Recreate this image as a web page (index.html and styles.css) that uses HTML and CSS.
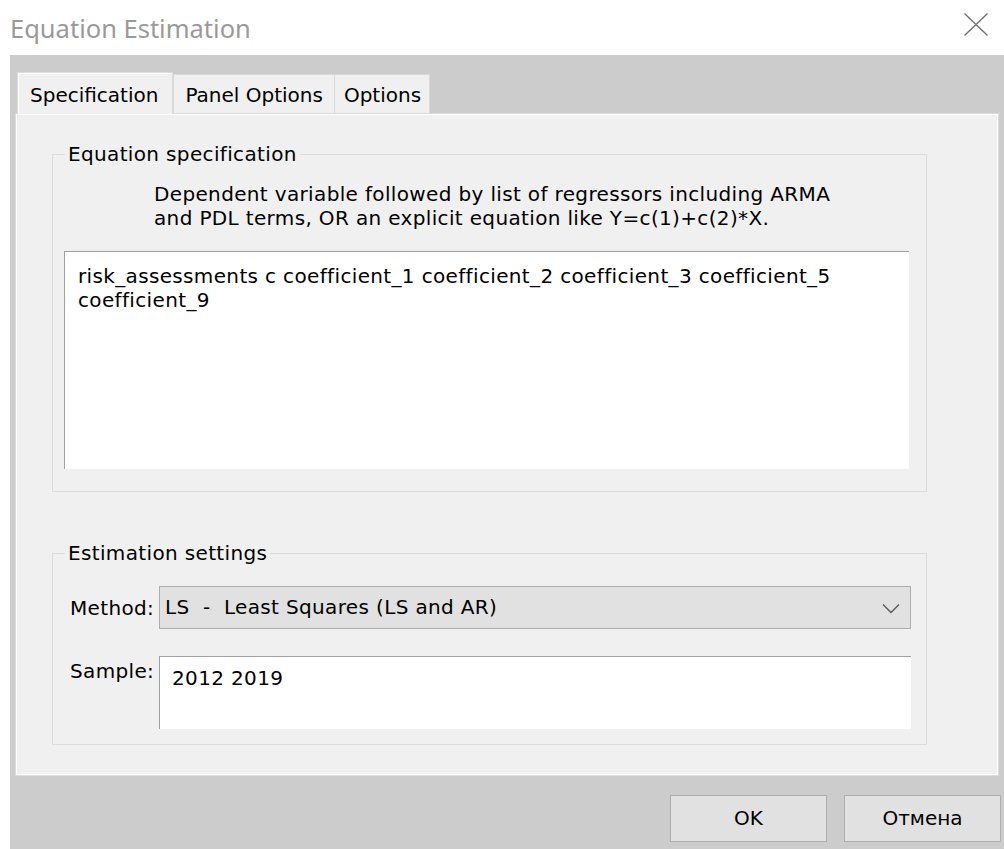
FILE: index.html
```html
<!DOCTYPE html>
<html lang="en">
<head>
<meta charset="utf-8">
<title>Equation Estimation</title>
<link rel="stylesheet" href="styles.css">
</head>
<body>
<div class="titlebar">
  <div class="title">Equation Estimation</div>
  <svg class="close" width="24" height="23" viewBox="0 0 24 23" aria-hidden="true">
    <path d="M0.5 0.5 L23.5 22.5 M23.5 0.5 L0.5 22.5" stroke="#6e6e6e" stroke-width="1.3" fill="none"/>
  </svg>
</div>
<div class="window">
  <div class="tabs">
    <div class="tab active">Specification</div>
    <div class="tab wide">Panel Options</div>
    <div class="tab">Options</div>
  </div>
  <div class="page">
    <fieldset class="group spec">
      <legend>Equation specification</legend>
      <p class="hint">Dependent variable followed by list of regressors including ARMA<br>and PDL terms, OR an explicit equation like Y=c(1)+c(2)*X.</p>
      <div class="edit big">risk_assessments c coefficient_1 coefficient_2 coefficient_3 coefficient_5<br>coefficient_9</div>
    </fieldset>
    <fieldset class="group settings">
      <legend>Estimation settings</legend>
      <div class="row method">
        <span class="label">Method:</span>
        <div class="combo">
          <span>LS&nbsp; - &nbsp;Least Squares (LS and AR)</span>
          <svg width="18" height="11" viewBox="0 0 18 11" aria-hidden="true">
            <path d="M1 1.5 L9 9.5 L17 1.5" stroke="#5a5a5a" stroke-width="1.4" fill="none"/>
          </svg>
        </div>
      </div>
      <div class="row sample">
        <span class="label">Sample:</span>
        <div class="edit small">2012 2019</div>
      </div>
    </fieldset>
  </div>
  <div class="footer">
    <div class="button">OK</div>
    <div class="button">Отмена</div>
  </div>
</div>
</body>
</html>
```
FILE: styles.css
```css
html, body {
  margin: 0;
  background: #ffffff;
}

body {
  font-family: "DejaVu Sans", "Liberation Sans", sans-serif;
  font-size: 20px;
  line-height: 24px;
  color: #000;
  width: 1004px;
  height: 849px;
  overflow: hidden;
}

/* window caption */
.titlebar {
  height: 55px;
  display: flex;
  align-items: center;
  justify-content: space-between;
  padding: 0 16px 0 10px;
  box-sizing: border-box;
}

.title {
  font-family: "Noto Sans", "Open Sans", sans-serif;
  font-size: 25.5px;
  line-height: 30px;
  color: #9a9a9a;
}

.close {
  display: block;
  margin-top: -6px;
}

/* dialog client area */
.window {
  margin-left: 10px;
  height: 794px;
  background: #cccccc;
  padding: 17px 5px 0 5px;
  box-sizing: border-box;
}

.tabs {
  display: flex;
  align-items: flex-end;
  height: 41px;
  padding-left: 2px;
}

.tab {
  height: 39px;
  box-sizing: border-box;
  padding: 8px 8px 0 9px;
  background: #f0f0f0;
  border: 1px solid #d9d9d9;
  border-bottom: none;
  margin-right: -1px;
  white-space: nowrap;
}

.tab.wide {
  padding: 8px 11px 0 11px;
}

.tab.active {
  height: 42px;
  padding: 10px 14px 0 12px;
  border-color: #dadada;
  box-shadow: inset 1px 1px 0 #ffffff;
  position: relative;
  z-index: 1;
  margin-bottom: -1px;
  margin-right: 0;
}

.page {
  height: 663px;
  box-sizing: border-box;
  background: #f0f0f0;
  border: 1px solid #dadada;
  box-shadow: inset 1px 1px 0 #ffffff, inset -1px -1px 0 #ffffff;
  padding: 28px 71px 0 36px;
  letter-spacing: 0.35px;
}

/* group boxes */
.group {
  margin: 0;
  padding: 0;
  border: 1px solid #dcdcdc;
  min-width: 0;
}

.group legend {
  margin-left: 12px;
  padding: 0 3px;
}

.hint {
  margin: 16px 0 0 101px;
}

.edit {
  background: #ffffff;
  border-top: 1px solid #a0a0a0;
  border-left: 1px solid #a0a0a0;
  box-sizing: border-box;
}

.edit.big {
  margin: 21px 17px 22px 11px;
  height: 218px;
  padding: 12px 0 0 13px;
}

.settings {
  margin-top: 49px;
}

.row {
  display: flex;
  align-items: flex-start;
  padding-left: 17px;
  margin-right: 15px;
}

.row .label {
  width: 89px;
  flex: none;
}

.method {
  margin-top: 21px;
  align-items: center;
}

.combo {
  flex: 1;
  height: 43px;
  box-sizing: border-box;
  background: #e1e1e1;
  border: 1px solid #adadad;
  display: flex;
  align-items: center;
  justify-content: space-between;
  padding: 0 10px 1px 5px;
}

.combo svg {
  display: block;
  margin-top: 2px;
}

.sample {
  margin-top: 27px;
  margin-bottom: 15px;
}

.sample .label {
  padding-top: 3px;
}

.edit.small {
  flex: 1;
  height: 73px;
  padding: 9px 0 0 12px;
}

/* dialog buttons */
.footer {
  display: flex;
  justify-content: flex-end;
  gap: 17px;
  margin: 19px -2px 0 0;
}

.button {
  width: 157px;
  height: 47px;
  box-sizing: border-box;
  background: #e1e1e1;
  border: 1px solid #adadad;
  display: flex;
  align-items: center;
  justify-content: center;
  padding-bottom: 1px;
}
```
